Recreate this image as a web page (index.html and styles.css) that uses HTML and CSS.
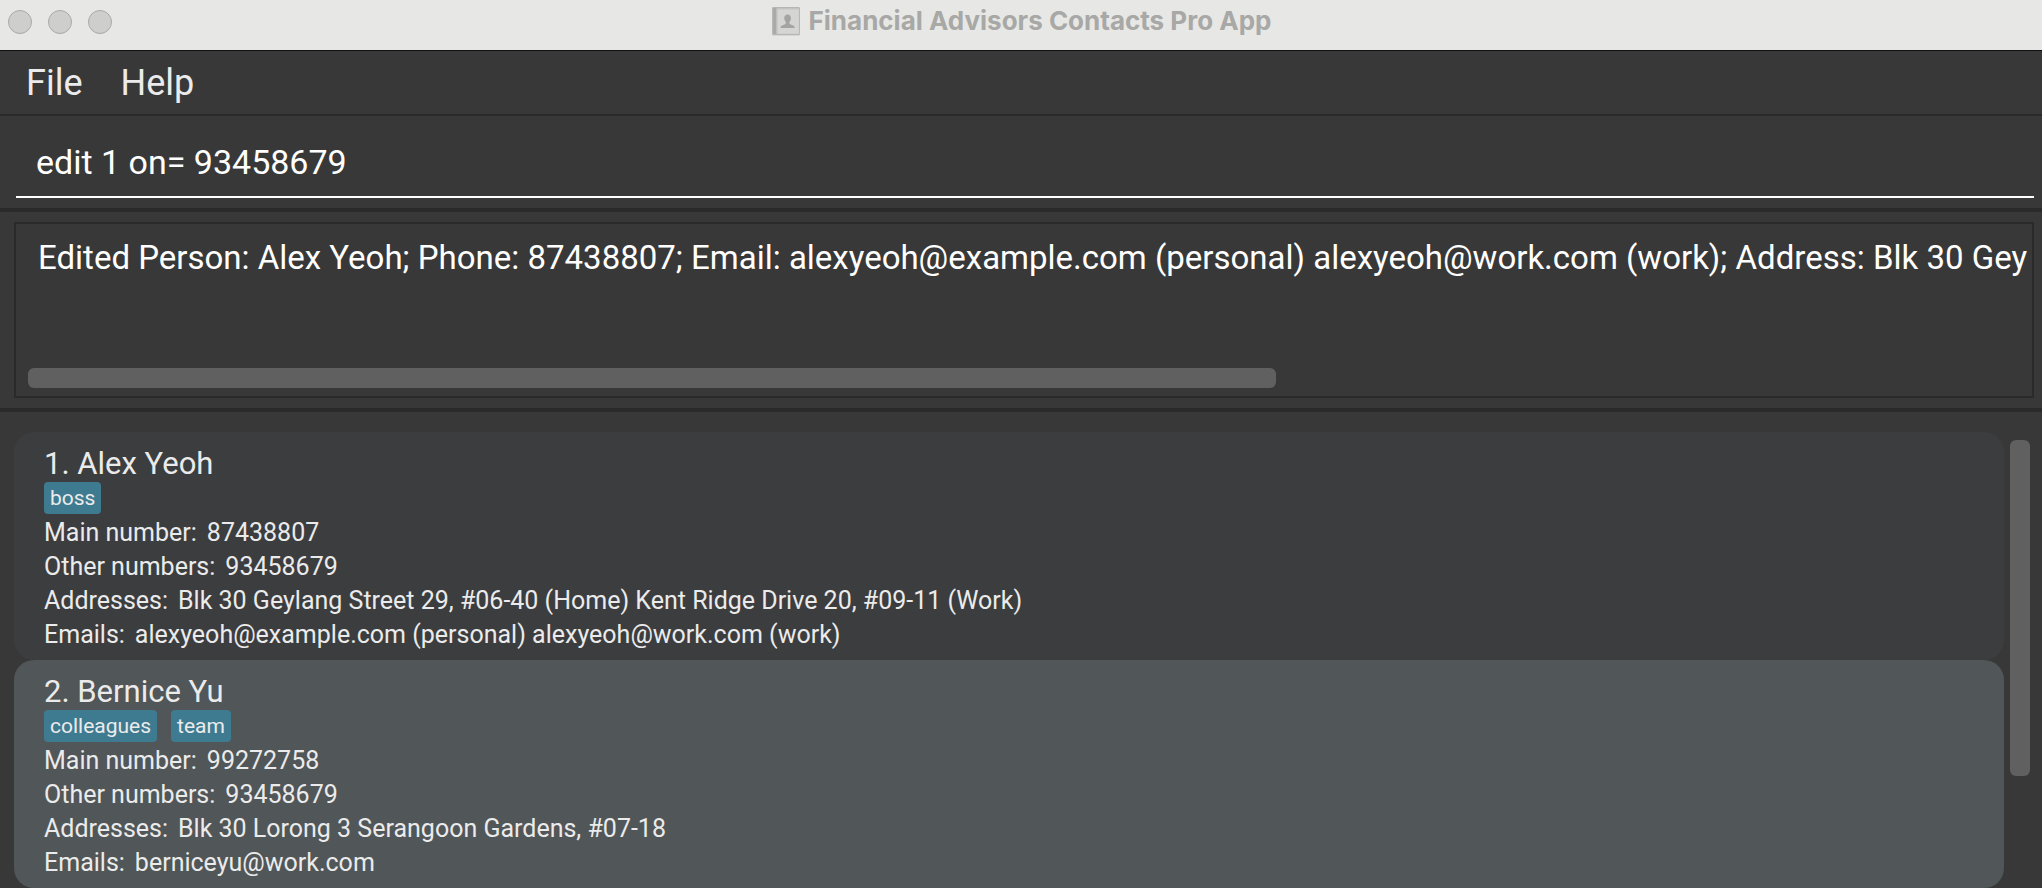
FILE: index.html
```html
<!DOCTYPE html>
<html lang="en">
<head>
<meta charset="utf-8">
<title>Financial Advisors Contacts Pro App</title>
<link rel="stylesheet" href="styles.css">
</head>
<body>
<div class="window">
  <header class="titlebar">
    <div class="lights">
      <button class="light" type="button" aria-label="Close"></button>
      <button class="light" type="button" aria-label="Minimize"></button>
      <button class="light" type="button" aria-label="Zoom"></button>
    </div>
    <h1 class="title">
      <svg class="app-icon" viewBox="0 0 28 28" aria-hidden="true">
        <rect x="1" y="2" width="26" height="26" rx="1" fill="#d6d6d4"/>
        <rect x="1" y="1" width="26" height="26" rx="1" fill="#b6b6b4"/>
        <rect x="2" y="2" width="3" height="24" fill="#aaaaa8"/>
        <rect x="5" y="2" width="1" height="24" fill="#c4c4c2"/>
        <rect x="6" y="3" width="20" height="23" fill="#d5d5d3"/>
        <rect x="6" y="2" width="20" height="1" fill="#c6c6c4"/>
        <path d="M15.500 8c2.200 0 3.200 1.600 3.100 3.600c-.1 1.600-.9 2.600-1.400 3.400c-.3 1.500.3 2 1.700 2.500c2 .7 3.300 1.200 3.300 3h-13.400c0-1.800 1.300-2.300 3.300-3c1.400-.5 2-1 1.700-2.500c-.5-.8-1.300-1.800-1.400-3.400c-.1-2 .9-3.600 3.100-3.600z" fill="#a4a4a2"/>
      </svg>
      <span>Financial Advisors Contacts Pro App</span>
    </h1>
  </header>
  <nav class="menubar">
    <button class="menu" type="button">File</button>
    <button class="menu" type="button">Help</button>
  </nav>
  <form class="command">
    <input class="command-input" type="text" aria-label="Command" value="edit 1 on= 93458679">
  </form>
  <section class="result">
    <div class="result-box">
      <textarea class="result-text" readonly wrap="off" rows="1" aria-label="Result">Edited Person: Alex Yeoh; Phone: 87438807; Email: alexyeoh@example.com (personal) alexyeoh@work.com (work); Address: Blk 30 Geylang</textarea>
      <div class="hbar"><div class="hthumb"></div></div>
    </div>
  </section>
  <main class="people">
    <ul class="list">
      <li class="card">
        <h2 class="name">1. Alex Yeoh</h2>
        <div class="tags"><span class="tag">boss</span></div>
        <dl class="fields">
          <div class="field"><dt>Main number:</dt><dd>87438807</dd></div>
          <div class="field"><dt>Other numbers:</dt><dd>93458679</dd></div>
          <div class="field"><dt>Addresses:</dt><dd>Blk 30 Geylang Street 29, #06-40 (Home) Kent Ridge Drive 20, #09-11 (Work)</dd></div>
          <div class="field"><dt>Emails:</dt><dd>alexyeoh@example.com (personal) alexyeoh@work.com (work)</dd></div>
        </dl>
      </li>
      <li class="card card-alt">
        <h2 class="name">2. Bernice Yu</h2>
        <div class="tags"><span class="tag">colleagues</span><span class="tag">team</span></div>
        <dl class="fields">
          <div class="field"><dt>Main number:</dt><dd>99272758</dd></div>
          <div class="field"><dt>Other numbers:</dt><dd>93458679</dd></div>
          <div class="field"><dt>Addresses:</dt><dd>Blk 30 Lorong 3 Serangoon Gardens, #07-18</dd></div>
          <div class="field"><dt>Emails:</dt><dd>berniceyu@work.com</dd></div>
        </dl>
      </li>
    </ul>
    <div class="vbar"><div class="vthumb"></div></div>
  </main>
</div>
</body>
</html>
```
FILE: styles.css
```css
* {
  box-sizing: border-box;
}

body {
  margin: 0;
  background: #383838;
  color: #ebebeb;
  font-family: Roboto, Inter, sans-serif;
}

button,
input,
textarea {
  margin: 0;
  padding: 0;
  border: 0;
  background: none;
  color: inherit;
  font: inherit;
  outline: none;
}

h1, h2, ul, dl, dd {
  margin: 0;
  padding: 0;
  font-weight: 400;
}

.titlebar {
  display: grid;
  grid-template-columns: 1fr auto 1fr;
  align-items: center;
  height: 51px;
  padding: 0 8px 6px;
  background: #e7e7e5;
  border-bottom: 1px solid #111111;
}

.lights {
  display: flex;
  gap: 16px;
}

.light {
  width: 24px;
  height: 24px;
  border: 1px solid #a9a9a7;
  border-radius: 50%;
  background: #cececc;
}

.title {
  display: flex;
  align-items: center;
  gap: 8px;
  padding-bottom: 2px;
  color: #a8a8a6;
  font-family: Inter, Roboto, sans-serif;
  font-size: 26px;
  line-height: 32px;
  font-weight: 700;
}

.app-icon {
  width: 30px;
  height: 30px;
}

.menubar {
  display: flex;
  gap: 38px;
  padding: 9px 26px 7px;
  border-bottom: 2px solid #2a2a2a;
}

.menu {
  font-size: 36px;
  line-height: 47px;
}

.command {
  padding: 20px 8px 10px 16px;
  border-bottom: 4px solid #2a2a2a;
}

.command-input {
  display: block;
  width: 100%;
  height: 62px;
  padding: 0 20px 8px;
  border-bottom: 2px solid #ffffff;
  color: #ffffff;
  font-size: 34px;
}

.result {
  padding: 10px 8px 10px 14px;
  border-bottom: 4px solid #2a2a2a;
}

.result-box {
  display: flex;
  flex-direction: column;
  justify-content: space-between;
  height: 176px;
  padding: 12px 4px 8px 12px;
  border: 2px solid #2a2a2a;
}

.result-text {
  display: block;
  width: 100%;
  height: 44px;
  padding-left: 10px;
  overflow: hidden;
  resize: none;
  color: #ffffff;
  font-size: 33px;
  line-height: 44px;
  white-space: pre;
}

.hthumb {
  width: 62.4%;
  height: 20px;
  border-radius: 6px;
  background: #606060;
}

.people {
  display: flex;
  gap: 6px;
  padding: 20px 12px 0 14px;
}

.list {
  flex: 1;
  min-width: 0;
  list-style: none;
}

.card {
  padding: 12px 30px 8px;
  border-radius: 20px;
  background: #3c3d3f;
}

.card-alt {
  background: #515658;
}

.name {
  padding-top: 2px;
  font-size: 31px;
  line-height: 36px;
}

.tags {
  display: flex;
  gap: 14px;
}

.tag {
  padding: 0 6px;
  border-radius: 4px;
  background: #3e7b91;
  font-size: 21px;
  line-height: 32px;
}

.fields {
  padding-top: 2px;
}

.field {
  display: flex;
  gap: 10px;
  font-size: 25px;
  line-height: 34px;
}

.vbar {
  width: 20px;
  padding-top: 8px;
}

.vthumb {
  height: 75%;
  border-radius: 6px;
  background: #606060;
}
```
